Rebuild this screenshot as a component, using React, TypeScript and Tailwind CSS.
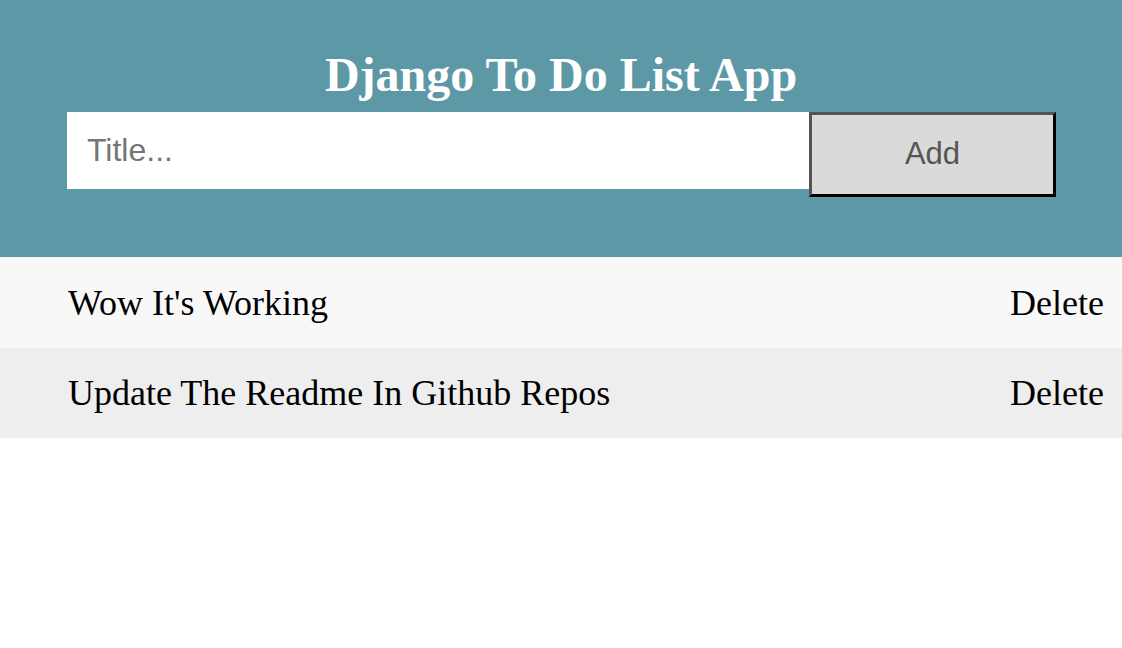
import React from "react";

export default function App() {
  const items = ["Wow It's Working", "Update The Readme In Github Repos"];
  return (
    <div className="w-[1122px] h-[648px] bg-white" style={{ fontFamily: '"Liberation Serif", serif' }}>
      <div className="bg-[#5c98a6] h-[257px] pt-[45px]">
        <h1 className="text-center text-white font-bold text-[48px] leading-[60px] font-['Liberation_Serif',serif]">
          Django To Do List App
        </h1>
        <div className="flex ml-[67px] mt-[7px]">
          <input
            placeholder="Title..."
            className="w-[742px] h-[77px] bg-white pl-[20px] text-[32px] outline-none placeholder:text-[#757575] font-['Liberation_Sans',sans-serif] pb-[1px]"
          />
          <button className="w-[247px] h-[85px] bg-[#dadada] text-[#555] text-[31px] border-[3px] border-t-[#555] border-l-[#555] border-b-black border-r-black font-['Liberation_Sans',sans-serif]">
            Add
          </button>
        </div>
      </div>
      <div>
        {items.map((t, i) => (
          <div
            key={i}
            className={`flex items-center justify-between pl-[68px] pr-[18px] text-[36px] text-black ${i % 2 === 0 ? "bg-[#f8f8f8] h-[91px]" : "bg-[#eeeeee] h-[90px]"}`}
          >
            <span>{t}</span>
            <span>Delete</span>
          </div>
        ))}
      </div>
    </div>
  );
}
